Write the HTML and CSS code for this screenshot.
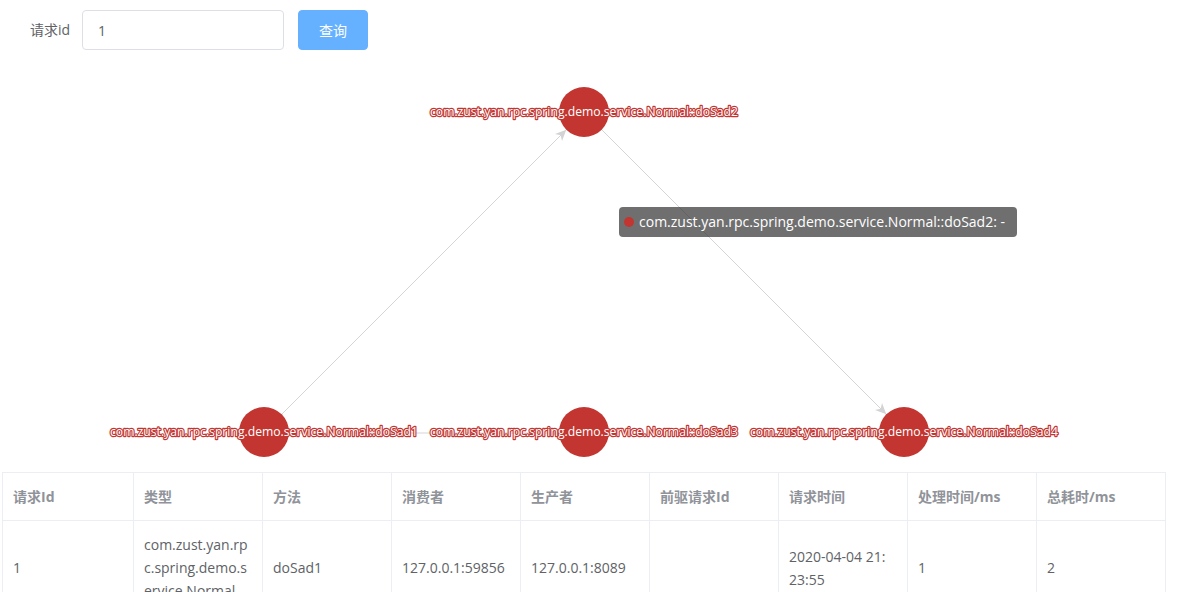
FILE: index.html
```html
<!DOCTYPE html>
<html lang="zh-CN">
<head>
<meta charset="utf-8">
<title>请求链路</title>
<link rel="stylesheet" href="styles.css">
</head>
<body>
<form class="query-form">
  <label class="form-label" for="reqId">请求id</label>
  <input class="form-input" id="reqId" type="text" value="1">
  <button class="btn-primary" type="button">查询</button>
</form>

<div class="chart">
  <svg class="chart-svg" width="1182" height="400" viewBox="0 0 1182 400">
    <defs>
      <marker id="arrow" viewBox="-12 -6 14 12" markerWidth="14" markerHeight="12" refX="0" refY="0" orient="auto" markerUnits="userSpaceOnUse">
        <path d="M0,0 L-11,-5 L-8,0 L-11,5 Z" fill="#d3d3d3"/>
      </marker>
    </defs>
    <g class="edges">
      <line x1="264" y1="360" x2="566.3" y2="57.7" marker-end="url(#arrow)"/>
      <line x1="584" y1="40" x2="886.3" y2="342.3" marker-end="url(#arrow)"/>
      <line x1="264" y1="361" x2="559" y2="361" marker-end="url(#arrow)"/>
    </g>
    <g class="nodes">
      <circle cx="264" cy="360" r="25"/>
      <circle cx="584" cy="40" r="25"/>
      <circle cx="584" cy="360" r="25"/>
      <circle cx="904" cy="360" r="25"/>
    </g>
    <g class="labels">
      <text x="264" y="359" textLength="308" lengthAdjust="spacingAndGlyphs">com.zust.yan.rpc.spring.demo.service.Normal::doSad1</text>
      <text x="584" y="39" textLength="308" lengthAdjust="spacingAndGlyphs">com.zust.yan.rpc.spring.demo.service.Normal::doSad2</text>
      <text x="584" y="359" textLength="308" lengthAdjust="spacingAndGlyphs">com.zust.yan.rpc.spring.demo.service.Normal::doSad3</text>
      <text x="904" y="359" textLength="308" lengthAdjust="spacingAndGlyphs">com.zust.yan.rpc.spring.demo.service.Normal::doSad4</text>
    </g>
  </svg>
  <div class="tooltip"><span class="tip-dot"></span>com.zust.yan.rpc.spring.demo.service.Normal::doSad2: -</div>
</div>

<table class="data-table">
  <colgroup>
    <col class="col-first">
    <col class="col"><col class="col"><col class="col"><col class="col">
    <col class="col"><col class="col"><col class="col"><col class="col">
  </colgroup>
  <thead>
    <tr>
      <th><div class="cell">请求Id</div></th>
      <th><div class="cell">类型</div></th>
      <th><div class="cell">方法</div></th>
      <th><div class="cell">消费者</div></th>
      <th><div class="cell">生产者</div></th>
      <th><div class="cell">前驱请求Id</div></th>
      <th><div class="cell">请求时间</div></th>
      <th><div class="cell">处理时间/ms</div></th>
      <th><div class="cell">总耗时/ms</div></th>
    </tr>
  </thead>
  <tbody>
    <tr>
      <td><div class="cell">1</div></td>
      <td><div class="cell">com.zust.yan.rpc.spring.demo.service.Normal</div></td>
      <td><div class="cell">doSad1</div></td>
      <td><div class="cell">127.0.0.1:59856</div></td>
      <td><div class="cell">127.0.0.1:8089</div></td>
      <td><div class="cell"></div></td>
      <td><div class="cell">2020-04-04 21:<br>23:55</div></td>
      <td><div class="cell">1</div></td>
      <td><div class="cell">2</div></td>
    </tr>
  </tbody>
</table>
</body>
</html>
```

FILE: styles.css
```css
html, body {
  margin: 0;
  padding: 0;
  background: #ffffff;
}

body {
  font-family: "Open Sans", "Noto Sans CJK SC", sans-serif;
  font-size: 14px;
  color: #606266;
  overflow: hidden;
}

.query-form {
  display: flex;
  align-items: center;
  padding: 10px 0 0 30px;
  margin: 0 0 22px 0;
  height: 40px;
}

.form-label {
  font-size: 14px;
  color: #606266;
  margin-right: 12px;
  line-height: 40px;
}

.form-input {
  box-sizing: border-box;
  width: 202px;
  height: 40px;
  border: 1px solid #dcdfe6;
  border-radius: 4px;
  padding: 0 15px;
  font-family: inherit;
  font-size: 14px;
  color: #606266;
  outline: none;
  margin: 0;
}

.btn-primary {
  box-sizing: border-box;
  margin-left: 14px;
  width: 70px;
  height: 40px;
  border: 1px solid #66b1ff;
  background: #66b1ff;
  color: #ffffff;
  border-radius: 4px;
  font-family: inherit;
  font-size: 14px;
  padding: 0;
  cursor: pointer;
}

.chart {
  position: relative;
  height: 400px;
}

.chart-svg {
  display: block;
}

.edges line {
  stroke: #d5d5d5;
  stroke-width: 1;
}

.nodes circle {
  fill: #c23531;
}

.labels text {
  font-family: "Open Sans", "DejaVu Sans", sans-serif;
  font-size: 12.5px;
  fill: #ffffff;
  stroke: #c23531;
  stroke-width: 2.4px;
  paint-order: stroke;
  stroke-linejoin: round;
  text-anchor: middle;
  dominant-baseline: central;
}

.tooltip {
  position: absolute;
  left: 619px;
  top: 135px;
  box-sizing: border-box;
  width: 398px;
  height: 30px;
  padding: 5px;
  border-radius: 4px;
  background: rgba(50, 50, 50, 0.7);
  color: #ffffff;
  font-size: 14px;
  line-height: 20px;
  white-space: nowrap;
  display: flex;
  align-items: center;
}

.tip-dot {
  display: inline-block;
  width: 10px;
  height: 10px;
  border-radius: 50%;
  background: #c23531;
  margin-right: 5px;
  flex: none;
}

.data-table {
  margin-left: 2px;
  border-collapse: separate;
  border-spacing: 0;
  table-layout: fixed;
  width: 1164px;
  border-top: 1px solid #ebeef5;
  border-left: 1px solid #ebeef5;
}

.col-first {
  width: 131px;
}

.col {
  width: 129px;
}

.data-table th,
.data-table td {
  padding: 12px 0;
  border-right: 1px solid #ebeef5;
  border-bottom: 1px solid #ebeef5;
  text-align: left;
  vertical-align: middle;
}

.data-table th {
  color: #909399;
  font-weight: bold;
}

.data-table td {
  color: #606266;
}

.cell {
  padding: 0 10px;
  line-height: 23px;
  word-break: break-all;
}
```
